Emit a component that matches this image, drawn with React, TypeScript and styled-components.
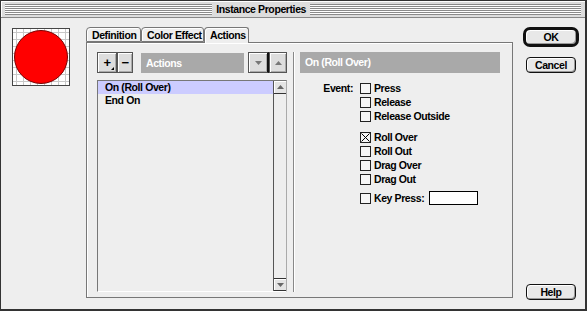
import React from "react";
import styled, { createGlobalStyle } from "styled-components";

const FONT = `"Liberation Sans", Arial, sans-serif`;

const Global = createGlobalStyle`
  html, body { margin: 0; padding: 0; background: #eeeeee; }
  body { font-family: ${FONT}; font-size: 10.5px; letter-spacing: -0.4px; font-weight: bold; color: #000; }
  * { box-sizing: border-box; }
`;

const Window = styled.div`
  width: 587px;
  height: 311px;
  background: #eeeeee;
  border: 1px solid #333;
  border-bottom-width: 2px;
  border-right-width: 2px;
  display: flex;
  flex-direction: column;
  overflow: hidden;
`;

const TitleBar = styled.div`
  height: 17px;
  flex: none;
  display: flex;
  align-items: center;
  gap: 4px;
  padding: 0 4px;
  background: #dddddd;
  border-bottom: 1px solid #888;
  box-shadow: inset 1px 1px 0 #fff;
`;

const Stripes = styled.div<{ $grow: number }>`
  flex: ${(p) => p.$grow} 1 0;
  height: 11px;
  background: repeating-linear-gradient(to bottom, #8a8a8a 0 1px, #ffffff 1px 2px);
  border-bottom: 1px solid #8a8a8a;
`;

const Title = styled.div`
  font-size: 10.5px;
  line-height: 12px;
  white-space: nowrap;
`;

const Body = styled.div`
  flex: 1;
  display: flex;
  padding: 9px 8px 11px 11px;
`;

const Thumb = styled.div`
  width: 58px;
  height: 58px;
  margin-top: 1px;
  margin-right: 16px;
  flex: none;
  border: 1px solid #444;
  background-color: #fff;
  background-image:
    linear-gradient(to right, #c8c8c8 1px, transparent 1px),
    linear-gradient(to bottom, #c8c8c8 1px, transparent 1px);
  background-size: 7px 7px;
  background-position: 3px 3px;
  display: flex;
  align-items: center;
  justify-content: center;
`;

const Circle = styled.div`
  width: 54px;
  height: 54px;
  border-radius: 50%;
  background: #ff0000;
  border: 1px solid #7a0000;
`;

const Center = styled.div`
  width: 427px;
  flex: none;
  display: flex;
  flex-direction: column;
  margin-right: 10px;
`;

const TabRow = styled.div`
  display: flex;
  height: 15px;
  align-items: flex-end;
  position: relative;
  z-index: 1;
`;

const Tab = styled.div<{ $w: number; $active?: boolean }>`
  width: ${(p) => p.$w}px;
  height: ${(p) => (p.$active ? 16 : 15)}px;
  margin-bottom: ${(p) => (p.$active ? -1 : 0)}px;
  padding: 1px 0 0 5px;
  line-height: 13px;
  border: 1px solid #777;
  border-bottom: ${(p) => (p.$active ? "none" : "1px solid #777")};
  border-radius: 4px 3px 0 0;
  background: #eeeeee;
  box-shadow: inset 1px 1px 0 #fff;
  white-space: nowrap;
`;

const Panel = styled.div`
  flex: 1;
  border: 1px solid #777;
  box-shadow: inset 1px 1px 0 #fff;
  padding: 9px 12px 5px 10px;
  display: flex;
`;

const LeftCol = styled.div`
  width: 190px;
  display: flex;
  flex-direction: column;
  gap: 7px;
`;

const Toolbar = styled.div`
  height: 21px;
  display: flex;
  align-items: stretch;
`;

const ToolButton = styled.div<{ $w: number; $gap?: number; $split?: boolean }>`
  width: ${(p) => p.$w}px;
  margin-right: ${(p) => p.$gap ?? 0}px;
  position: relative;
  background: #dddddd;
  border: 1px solid #555;
  border-right: ${(p) => (p.$split ? "2px solid #111" : "1px solid #555")};
  box-shadow: inset 1px 1px 0 #fff, inset -1px -1px 0 #aaa;
  display: flex;
  align-items: center;
  justify-content: center;
  font-size: 13px;
  line-height: 13px;
`;

const PopMark = styled.span`
  position: absolute;
  right: 2px;
  bottom: 2px;
  width: 0;
  height: 0;
  border-left: 3px solid transparent;
  border-bottom: 3px solid #000;
`;

const GrayBar = styled.div<{ $w?: number }>`
  ${(p) => (p.$w ? `width: ${p.$w}px;` : "")}
  margin-right: 4px;
  height: 20px;
  background: #a9a9a9;
  color: #fff;
  padding-left: 5px;
  line-height: 20px;
  margin-top: 1px;
`;

const HeaderBar = styled.div`
  height: 21px;
  background: #a9a9a9;
  color: #fff;
  padding-left: 5px;
  line-height: 21px;
`;

const ListBox = styled.div`
  flex: 1;
  border: 1px solid #777;
  border-right-color: #aaa;
  border-bottom-color: #fff;
  display: flex;
  background: #eeeeee;
`;

const ListItems = styled.div`
  flex: 1;
  display: flex;
  flex-direction: column;
`;

const ListItem = styled.div<{ $sel?: boolean }>`
  height: 13px;
  line-height: 13px;
  padding-left: 7px;
  background: ${(p) => (p.$sel ? "#ccccff" : "transparent")};
`;

const ScrollBar = styled.div`
  width: 13px;
  border-left: 1px solid #555;
  display: flex;
  flex-direction: column;
  justify-content: space-between;
  background: #eeeeee;
`;

const ScrollArrow = styled.div<{ $bottom?: boolean }>`
  height: 13px;
  background: #e4e4e4;
  border-top: ${(p) => (p.$bottom ? "1px solid #333" : "none")};
  border-bottom: 1px solid #333;
  box-shadow: inset 1px 1px 0 #fff;
  display: flex;
  align-items: center;
  justify-content: center;
`;

const Divider = styled.div`
  width: 1px;
  margin: 0 6px;
  background: #888;
  box-shadow: 1px 0 0 #fff;
`;

const RightCol = styled.div`
  width: 200px;
  display: flex;
  flex-direction: column;
`;

const EventGrid = styled.div`
  display: grid;
  grid-template-columns: 53px auto;
  column-gap: 7px;
  margin-top: 8px;
`;

const EventLabel = styled.div`
  text-align: right;
  line-height: 14px;
`;

const Checks = styled.div`
  display: flex;
  flex-direction: column;
`;

const CheckRow = styled.div<{ $gap?: number }>`
  height: 14px;
  margin-top: ${(p) => p.$gap ?? 0}px;
  display: flex;
  align-items: center;
  gap: 3px;
  white-space: nowrap;
`;

const Box = styled.div`
  width: 11px;
  height: 11px;
  border: 1px solid #222;
  background: #f6f6f6;
  flex: none;
  display: flex;
`;

const KeyInput = styled.div`
  width: 49px;
  height: 14px;
  margin-left: 2px;
  background: #fff;
  border: 1px solid #000;
`;

const Buttons = styled.div`
  width: 56px;
  flex: none;
  display: flex;
  flex-direction: column;
  align-items: flex-start;
`;

const DefaultRing = styled.div`
  width: 56px;
  height: 20px;
  border: 3px solid #111;
  border-radius: 7px;
  background: #e8e8e8;
  box-shadow: inset 1px 1px 0 #fff, inset -1px -1px 0 #999;
  display: flex;
  align-items: center;
  justify-content: center;
  line-height: 12px;
`;

const PushButton = styled.div<{ $top?: number; $auto?: boolean }>`
  width: 50px;
  height: 16px;
  margin-left: 3px;
  margin-top: ${(p) => (p.$auto ? "auto" : `${p.$top ?? 0}px`)};
  margin-bottom: ${(p) => (p.$auto ? "-2px" : "0")};
  border: 1px solid #111;
  border-radius: 4px;
  background: #e8e8e8;
  box-shadow: inset 1px 1px 0 #fff, inset -1px -1px 0 #999;
  display: flex;
  align-items: center;
  justify-content: center;
  line-height: 12px;
`;

const Tri = ({ up, color = "#777" }: { up?: boolean; color?: string }) => (
  <svg width="7" height="4" viewBox="0 0 7 4">
    {up ? <polygon points="0,4 7,4 3.5,0" fill={color} /> : <polygon points="0,0 7,0 3.5,4" fill={color} />}
  </svg>
);

const Check = ({ checked, label }: { checked?: boolean; label: string }) => (
  <>
    <Box>
      {checked && (
        <svg width="9" height="9" viewBox="0 0 9 9">
          <path d="M0.5 0.5 L8.5 8.5 M8.5 0.5 L0.5 8.5" stroke="#000" strokeWidth="1" />
        </svg>
      )}
    </Box>
    <span>{label}</span>
  </>
);

export default function App() {
  return (
    <>
      <Global />
      <Window>
        <TitleBar>
          <Stripes $grow={211} />
          <Title>Instance Properties</Title>
          <Stripes $grow={276} />
        </TitleBar>
        <Body>
          <Thumb>
            <Circle />
          </Thumb>
          <Center>
            <TabRow>
              <Tab $w={55}>Definition</Tab>
              <Tab $w={63}>Color Effect</Tab>
              <Tab $w={45} $active>
                Actions
              </Tab>
            </TabRow>
            <Panel>
              <LeftCol>
                <Toolbar>
                  <ToolButton $w={20}>
                    +<PopMark />
                  </ToolButton>
                  <ToolButton $w={16} $gap={8}>
                    −
                  </ToolButton>
                  <GrayBar $w={103}>Actions</GrayBar>
                  <ToolButton $w={21} $split>
                    <Tri />
                  </ToolButton>
                  <ToolButton $w={18}>
                    <Tri up />
                  </ToolButton>
                </Toolbar>
                <ListBox>
                  <ListItems>
                    <ListItem $sel>On (Roll Over)</ListItem>
                    <ListItem>End On</ListItem>
                  </ListItems>
                  <ScrollBar>
                    <ScrollArrow>
                      <Tri up color="#666" />
                    </ScrollArrow>
                    <ScrollArrow $bottom>
                      <Tri color="#666" />
                    </ScrollArrow>
                  </ScrollBar>
                </ListBox>
              </LeftCol>
              <Divider />
              <RightCol>
                <HeaderBar>On (Roll Over)</HeaderBar>
                <EventGrid>
                  <EventLabel>Event:</EventLabel>
                  <Checks>
                    <CheckRow>
                      <Check label="Press" />
                    </CheckRow>
                    <CheckRow>
                      <Check label="Release" />
                    </CheckRow>
                    <CheckRow>
                      <Check label="Release Outside" />
                    </CheckRow>
                    <CheckRow $gap={7}>
                      <Check checked label="Roll Over" />
                    </CheckRow>
                    <CheckRow>
                      <Check label="Roll Out" />
                    </CheckRow>
                    <CheckRow>
                      <Check label="Drag Over" />
                    </CheckRow>
                    <CheckRow>
                      <Check label="Drag Out" />
                    </CheckRow>
                    <CheckRow $gap={5}>
                      <Check label="Key Press:" />
                      <KeyInput />
                    </CheckRow>
                  </Checks>
                </EventGrid>
              </RightCol>
            </Panel>
          </Center>
          <Buttons>
            <DefaultRing>OK</DefaultRing>
            <PushButton $top={10}>Cancel</PushButton>
            <PushButton $auto>Help</PushButton>
          </Buttons>
        </Body>
      </Window>
    </>
  );
}
